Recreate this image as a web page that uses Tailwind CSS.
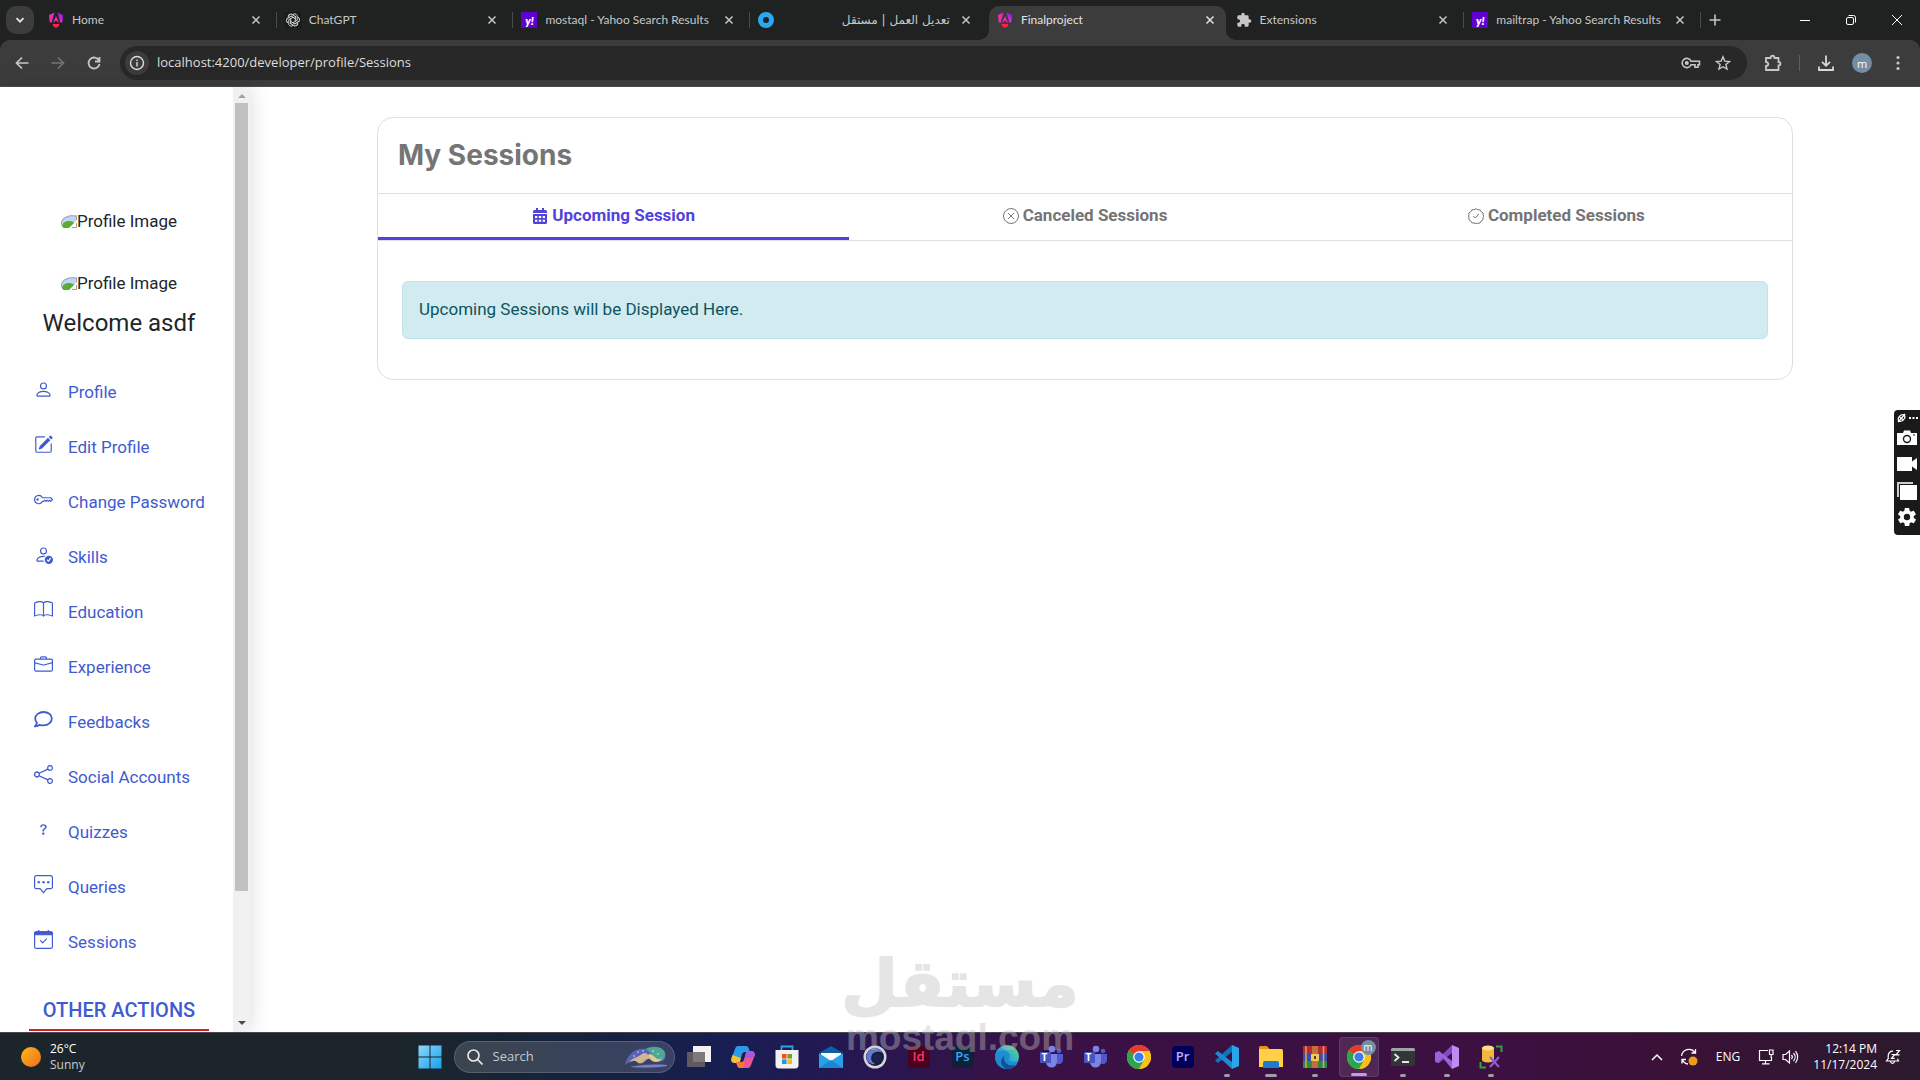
<!DOCTYPE html>
<html lang="en">
<head>
  <meta charset="UTF-8">
  <meta name="viewport" content="width=device-width, initial-scale=1.0">
  <title>Finalproject</title>
  <script src="https://cdn.jsdelivr.net/npm/@tailwindcss/browser@4"></script>
</head>
<body class="h-screen flex flex-col overflow-hidden bg-white font-['Open_Sans',sans-serif]">

  <!-- shared shapes -->
  <svg class="absolute size-0">
    <defs>
      <linearGradient id="ngGrad" x1="0" y1="1" x2="1" y2="0">
        <stop offset="0" stop-color="#ff2d6b"/><stop offset=".5" stop-color="#e32bd0"/><stop offset="1" stop-color="#6a1bf0"/>
      </linearGradient>
      <linearGradient id="winGrad" x1="0" y1="0" x2="1" y2="1">
        <stop offset="0" stop-color="#8bd8fb"/><stop offset="1" stop-color="#18a0ea"/>
      </linearGradient>
      <linearGradient id="edgeGrad" x1="0" y1="1" x2="1" y2="0">
        <stop offset="0" stop-color="#0d5aa7"/><stop offset=".5" stop-color="#2aa7dd"/><stop offset="1" stop-color="#66d96b"/>
      </linearGradient>
      <symbol id="x" viewBox="0 0 10 10"><path d="M1.5 1.5l7 7M8.500 1.500l-7 7" stroke="currentColor" stroke-width="1.5" fill="none"/></symbol>
      <symbol id="angular" viewBox="0 0 16 16">
        <path d="M1 3l5.500-2.500L3.500 11 1.600 10zM9.500.5L15 3l-.6 7-1.900 1z" fill="url(#ngGrad)"/>
        <path d="M8 4l3 6.500H9.800L9.300 9H6.700l-.5 1.500H5z" fill="#e62bb0"/>
        <path d="M4.500 12h7l-.5 2-3 2-3-2z" fill="#ff1f4b"/>
      </symbol>
      <symbol id="puzzle" viewBox="0 0 24 24"><path d="M20.500 11H19V7a2 2 0 0 0-2-2h-4V3.500a2.500 2.500 0 0 0-5 0V5H4a2 2 0 0 0-2 2v3.800h1.500a2.700 2.700 0 0 1 0 5.400H2V20a2 2 0 0 0 2 2h3.800v-1.500a2.700 2.700 0 0 1 5.400 0V22H17a2 2 0 0 0 2-2v-4h1.500a2.500 2.500 0 0 0 0-5z"/></symbol>
      <symbol id="chrome" viewBox="0 0 24 24">
        <circle cx="12" cy="12" r="12" fill="#fbc116"/>
        <path d="M12 12L1.600 6A12 12 0 0 1 22.400 6z" fill="#e33b2e"/>
        <path d="M12 12L1.600 6A12 12 0 0 0 12 24l5.200-9z" fill="#2da44e"/>
        <path d="M12 6h10.400A12 12 0 0 1 12 24l5.200-9z" fill="#fbc116"/>
        <circle cx="12" cy="12" r="5.800" fill="#fff"/><circle cx="12" cy="12" r="4.600" fill="#3b7ded"/>
      </symbol>
      <symbol id="teams" viewBox="0 0 24 24">
        <circle cx="13" cy="4" r="3.300" fill="#7b83eb"/><circle cx="20" cy="6" r="2.300" fill="#5059c9"/>
        <path d="M16 9h8v6a4 4 0 0 1-6 3.500z" fill="#5059c9"/><path d="M7 9h11v8a5.500 5.500 0 0 1-11 0z" fill="#7b83eb"/>
        <rect x="1" y="7" width="11" height="11" rx="1" fill="#4b53bc"/>
      </symbol>
      <clipPath id="oval"><ellipse cx="12" cy="9" rx="12" ry="8"/></clipPath>
      <symbol id="broken" viewBox="0 0 16 14">
        <g clip-path="url(#oval)">
          <rect width="16" height="14" fill="#bfd7f5"/>
          <ellipse cx="8" cy="12" rx="7" ry="5" fill="#5bac33"/>
          <path d="M8 14l8-8v8z" fill="#fff"/>
          <path d="M1 12a11 8 0 0 1 14-10M15.500 1v5M11 13.500h4.500V9" fill="none" stroke="#9aa0a6"/>
        </g>
      </symbol>
    </defs>
  </svg>

  <!-- browser window -->
  <header class="shrink-0 bg-[#1f2221] text-[#c7c7c7]">
    <div class="flex h-10 items-center font-['Lato',sans-serif] text-[12px]">
      <button aria-label="Search tabs" class="ml-1.5 mr-1.5 grid size-7 shrink-0 place-items-center rounded-[10px] bg-[#3c3c3c]">
        <svg class="size-2.5" viewBox="0 0 10 10" fill="none" stroke="#e3e3e3" stroke-width="1.800"><path d="M1.500 3.200L5 6.700l3.500-3.500"/></svg>
      </button>
      <div class="flex h-full max-w-[1661px] flex-1">
        <div class="flex min-w-0 flex-1 items-center gap-2 pl-2">
          <svg class="size-4 shrink-0"><use href="#angular"/></svg>
          <span class="flex-1 truncate">Home</span>
          <button aria-label="Close tab" class="grid size-4 place-items-center"><svg class="size-2.5"><use href="#x"/></svg></button>
          <span class="ml-1 h-4 w-px bg-[#4a4a4a]"></span>
        </div>
        <div class="flex min-w-0 flex-1 items-center gap-2 pl-2">
          <svg class="size-4 shrink-0" viewBox="0 0 16 16" fill="none" stroke="#d8d8d8" stroke-width="1">
            <rect width="16" height="16" rx="3" fill="#181a19" stroke="none"/>
            <g id="petal"><path d="M8 2.500a2.600 2.600 0 0 1 4.200 2.700v3.200L8 10.600"/></g>
            <use href="#petal" transform="rotate(60 8 8)"/><use href="#petal" transform="rotate(120 8 8)"/><use href="#petal" transform="rotate(180 8 8)"/><use href="#petal" transform="rotate(240 8 8)"/><use href="#petal" transform="rotate(300 8 8)"/>
          </svg>
          <span class="flex-1 truncate">ChatGPT</span>
          <button aria-label="Close tab" class="grid size-4 place-items-center"><svg class="size-2.5"><use href="#x"/></svg></button>
          <span class="ml-1 h-4 w-px bg-[#4a4a4a]"></span>
        </div>
        <div class="flex min-w-0 flex-1 items-center gap-2 pl-2">
          <span class="grid size-4 shrink-0 place-items-center bg-[#5f01d1] text-[11px] leading-none font-extrabold text-white italic">y!</span>
          <span class="flex-1 truncate">mostaql - Yahoo Search Results</span>
          <button aria-label="Close tab" class="grid size-4 place-items-center"><svg class="size-2.5"><use href="#x"/></svg></button>
          <span class="ml-1 h-4 w-px bg-[#4a4a4a]"></span>
        </div>
        <div class="flex min-w-0 flex-1 items-center gap-2 pl-2">
          <span class="size-4 shrink-0 rounded-full border-[5px] border-[#2aa8f2]"></span>
          <span class="flex-1 truncate font-['DejaVu_Sans',sans-serif] text-[12px]" dir="rtl">تعديل العمل | مستقل</span>
          <button aria-label="Close tab" class="grid size-4 place-items-center"><svg class="size-2.5"><use href="#x"/></svg></button>
          <span class="ml-1 h-4 w-px"></span>
        </div>
        <div class="relative mx-0.5 mt-1.5 flex min-w-0 flex-1 items-center gap-2 rounded-t-[10px] bg-[#3c3c3c] pb-1.5 pl-2 text-[#e3e3e3]">
          <svg class="absolute -left-2.5 bottom-0 size-2.5" viewBox="0 0 10 10"><path d="M10 0v10H0A10 10 0 0 0 10 0" fill="#3c3c3c"/></svg>
          <svg class="absolute -right-2.5 bottom-0 size-2.5" viewBox="0 0 10 10"><path d="M0 0v10h10A10 10 0 0 1 0 0" fill="#3c3c3c"/></svg>
          <svg class="size-4 shrink-0"><use href="#angular"/></svg>
          <span class="flex-1 truncate">Finalproject</span>
          <button aria-label="Close tab" class="mr-2 grid size-4 place-items-center"><svg class="size-2.5"><use href="#x"/></svg></button>
        </div>
        <div class="flex min-w-0 flex-1 items-center gap-2 pl-2">
          <svg class="size-4 shrink-0" fill="#c7c7c7"><use href="#puzzle"/></svg>
          <span class="flex-1 truncate">Extensions</span>
          <button aria-label="Close tab" class="grid size-4 place-items-center"><svg class="size-2.5"><use href="#x"/></svg></button>
          <span class="ml-1 h-4 w-px bg-[#4a4a4a]"></span>
        </div>
        <div class="flex min-w-0 flex-1 items-center gap-2 pl-2">
          <span class="grid size-4 shrink-0 place-items-center bg-[#5f01d1] text-[11px] leading-none font-extrabold text-white italic">y!</span>
          <span class="flex-1 truncate">mailtrap - Yahoo Search Results</span>
          <button aria-label="Close tab" class="grid size-4 place-items-center"><svg class="size-2.5"><use href="#x"/></svg></button>
          <span class="ml-1 h-4 w-px bg-[#4a4a4a]"></span>
        </div>
      </div>
      <button aria-label="New tab" class="grid size-7 place-items-center"><svg class="size-3" viewBox="0 0 12 12" stroke="#c7c7c7" stroke-width="1.600"><path d="M6 .5v11M.5 6h11"/></svg></button>
      <div class="ml-auto flex">
        <button aria-label="Minimize" class="grid h-10 w-[46px] place-items-center"><svg class="size-3" viewBox="0 0 12 12" stroke="#fff"><path d="M1 6.500h10"/></svg></button>
        <button aria-label="Restore" class="grid h-10 w-[46px] place-items-center"><svg class="size-3" viewBox="0 0 12 12" stroke="#fff" fill="none"><rect x="1.500" y="3.500" width="7" height="7" rx="1.500"/><path d="M3.500 1.500h5a2 2 0 0 1 2 2v5"/></svg></button>
        <button aria-label="Close" class="grid h-10 w-[46px] place-items-center"><svg class="size-3" viewBox="0 0 12 12" stroke="#fff"><path d="M1 1l10 10M11 1L1 11"/></svg></button>
      </div>
    </div>

    <div class="flex h-[47px] items-center rounded-t-[10px] border-b border-[#4a4a4a] bg-[#3c3c3c] pr-1">
      <div class="flex w-30 items-center pl-1">
        <button aria-label="Back" class="grid size-9 place-items-center"><svg class="size-3.5" viewBox="0 0 14 14" fill="none" stroke="#c7c7c7" stroke-width="1.700"><path d="M13.500 7H1.500M7 1.500L1.500 7 7 12.500"/></svg></button>
        <button aria-label="Forward" class="grid size-9 place-items-center"><svg class="size-3.5" viewBox="0 0 14 14" fill="none" stroke="#757575" stroke-width="1.700"><path d="M.5 7h12M7 1.500L12.500 7 7 12.500"/></svg></button>
        <button aria-label="Reload" class="grid size-9 place-items-center"><svg class="size-3.5" viewBox="0 0 14 14" fill="none" stroke="#c7c7c7" stroke-width="1.800"><path d="M12 4.500A5.500 5.500 0 1 0 12.500 8M12.500 1v4.500H8"/></svg></button>
      </div>
      <div class="flex h-[34px] flex-1 items-center rounded-full bg-[#282828] pl-[5px] pr-2">
        <button aria-label="Site information" class="grid size-6 place-items-center rounded-full bg-[#3c3c3c]">
          <svg class="size-4" viewBox="0 0 16 16" fill="none" stroke="#dcdcdc" stroke-width="1.400"><circle cx="8" cy="8" r="6.500"/><path d="M8 7v4.500M8 4.400v1.600"/></svg>
        </button>
        <input aria-label="Address" class="ml-2 flex-1 bg-transparent text-[13px] text-[#dedede] outline-none" value="localhost:4200/developer/profile/Sessions">
        <button aria-label="Passwords" class="grid size-8 place-items-center"><svg class="h-3 w-5" viewBox="0 0 20 12" fill="none" stroke="#c7c7c7" stroke-width="1.600"><path d="M10 4.200h8.500v3.600H17v2.500h-3V7.800h-4a4.600 4.600 0 1 1 0-3.600z"/><circle cx="5.800" cy="6" r="1.200" fill="#c7c7c7"/></svg></button>
        <button aria-label="Bookmark" class="grid size-8 place-items-center"><svg class="size-4" viewBox="0 0 16 16" fill="none" stroke="#c7c7c7" stroke-width="1.400"><path d="M8 1.800l1.800 4.300 4.700.4-3.600 3 1.100 4.600L8 11.700l-4 2.400 1.100-4.600-3.600-3 4.700-.4z"/></svg></button>
      </div>
      <button aria-label="Extensions" class="ml-2 grid size-9 place-items-center"><svg class="size-[18px]" viewBox="0 0 18 18" fill="none" stroke="#c7c7c7" stroke-width="1.800"><path d="M2 4h4.500c0-3 4-3 4 0H14.500v4c2.600 0 2.600 3.500 0 3.500V16H2v-4c3 0 3-4 0-4z"/></svg></button>
      <span class="mx-2 h-4 w-px bg-[#66586b]"></span>
      <button aria-label="Downloads" class="grid size-9 place-items-center"><svg class="size-4" viewBox="0 0 16 16" fill="none" stroke="#d8d8d8" stroke-width="1.800"><path d="M8 .5v10M4 6.800l4 4 4-4M1 11.500V15h14v-3.500"/></svg></button>
      <button aria-label="Account" class="grid size-9 place-items-center"><span class="grid size-5 place-items-center rounded-full bg-[#768ea4] text-[11px] leading-none text-white">m</span></button>
      <button aria-label="Menu" class="grid size-9 place-items-center"><svg class="size-4" viewBox="0 0 16 16" fill="#c7c7c7"><circle cx="8" cy="2.500" r="1.600"/><circle cx="8" cy="8" r="1.600"/><circle cx="8" cy="13.500" r="1.600"/></svg></button>
    </div>
  </header>

  <!-- page -->
  <div class="flex min-h-0 flex-1 font-['Roboto',sans-serif]">
    <aside class="flex w-[250px] shrink-0 shadow-[0_0_20px_rgba(0,0,0,0.15)]">
      <div class="flex-1 overflow-hidden text-[17px] leading-6 text-[#212529]">
        <div class="ml-[29px] w-[180px] pt-[122px] text-center">
          <p class="flex h-6 items-center justify-center"><svg class="h-3.5 w-4"><use href="#broken"/></svg>Profile Image</p>
          <p class="mt-[38px] flex h-6 items-center justify-center"><svg class="h-3.5 w-4"><use href="#broken"/></svg>Profile Image</p>
          <h2 class="mt-3 text-[24px] leading-8">Welcome asdf</h2>
        </div>
        <nav class="mt-[25px] pl-[34px] text-[#3f5bd0]">
          <a href="#" class="flex h-[55px] items-center gap-[15px]">
            <svg class="mb-1 size-[19px]" viewBox="0 0 16 16" fill="currentColor"><path d="M8 8a3 3 0 1 0 0-6 3 3 0 0 0 0 6m2-3a2 2 0 1 1-4 0 2 2 0 0 1 4 0m4 8c0 1-1 1-1 1H3s-1 0-1-1 1-4 6-4 6 3 6 4m-1-.004c-.001-.246-.154-.986-.832-1.664C11.516 10.680 10.289 10 8 10s-3.516.680-4.168 1.332c-.678.678-.830 1.418-.832 1.664z"/></svg>
            Profile</a>
          <a href="#" class="flex h-[55px] items-center gap-[15px]">
            <svg class="mb-1 size-[19px]" viewBox="0 0 16 16" fill="currentColor"><path d="M15.502 1.940a.5.5 0 0 1 0 .706L14.459 3.690l-2-2L13.502.646a.5.5 0 0 1 .707 0l1.293 1.293zm-1.750 2.456-2-2L4.939 9.210a.5.5 0 0 0-.121.196l-.805 2.414a.25.25 0 0 0 .316.316l2.414-.805a.5.5 0 0 0 .196-.12l6.813-6.814z"/><path d="M1 13.500A1.500 1.500 0 0 0 2.500 15h11a1.500 1.500 0 0 0 1.500-1.500v-6a.5.5 0 0 0-1 0v6a.5.5 0 0 1-.5.5h-11a.5.5 0 0 1-.5-.5v-11a.5.5 0 0 1 .5-.5H9a.5.5 0 0 0 0-1H2.500A1.500 1.500 0 0 0 1 2.500z"/></svg>
            Edit Profile</a>
          <a href="#" class="flex h-[55px] items-center gap-[15px]">
            <svg class="mb-1 size-[19px]" viewBox="0 0 16 16" fill="currentColor"><path d="M0 8a4 4 0 0 1 7.465-2H14a.5.5 0 0 1 .354.146l1.500 1.500a.5.5 0 0 1 0 .708l-1.500 1.500a.5.5 0 0 1-.708 0L13 9.207l-.646.647a.5.5 0 0 1-.708 0L11 9.207l-.646.647a.5.5 0 0 1-.708 0L9 9.207l-.646.647A.5.5 0 0 1 8 10h-.535A4 4 0 0 1 0 8m4-3a3 3 0 1 0 2.712 4.285A.5.5 0 0 1 7.163 9h.63l.853-.854a.5.5 0 0 1 .708 0l.646.647.646-.647a.5.5 0 0 1 .708 0l.646.647.646-.647a.5.5 0 0 1 .708 0l.646.647.793-.793-1-1h-6.630a.5.5 0 0 1-.451-.285A3 3 0 0 0 4 5"/><path d="M4 8a1 1 0 1 1-2 0 1 1 0 0 1 2 0"/></svg>
            Change Password</a>
          <a href="#" class="flex h-[55px] items-center gap-[15px]">
            <svg class="mb-1 size-[19px]" viewBox="0 0 16 16" fill="currentColor"><path d="M12.500 16a3.500 3.500 0 1 0 0-7 3.500 3.500 0 0 0 0 7m1.679-4.493-1.335 2.226a.75.75 0 0 1-1.174.144l-.774-.773a.5.5 0 0 1 .708-.708l.547.548 1.170-1.951a.5.5 0 1 1 .858.514M11 5a3 3 0 1 1-6 0 3 3 0 0 1 6 0M8 7a2 2 0 1 0 0-4 2 2 0 0 0 0 4"/><path d="M8.256 14a4.500 4.500 0 0 1-.229-1.004H3c.001-.246.154-.986.832-1.664C4.484 10.680 5.711 10 8 10q.39 0 .74.025c.226-.341.496-.650.804-.918Q8.844 9.002 8 9c-5 0-6 3-6 4s1 1 1 1z"/></svg>
            Skills</a>
          <a href="#" class="flex h-[55px] items-center gap-[15px]">
            <svg class="mb-1 size-[19px]" viewBox="0 0 16 16" fill="currentColor"><path d="M1 2.828c.885-.370 2.154-.769 3.388-.893 1.330-.134 2.458.063 3.112.752v9.746c-.935-.530-2.120-.603-3.213-.493-1.180.12-2.370.461-3.287.811zm7.500-.141c.654-.689 1.782-.886 3.112-.752 1.234.124 2.503.523 3.388.893v9.923c-.918-.350-2.107-.692-3.287-.810-1.094-.111-2.278-.039-3.213.492zM8 1.783C7.015.936 5.587.81 4.287.94c-1.514.153-3.042.672-3.994 1.105A.5.5 0 0 0 0 2.500v11a.5.5 0 0 0 .707.455c.882-.4 2.303-.881 3.680-1.020 1.409-.142 2.590.087 3.223.877a.5.5 0 0 0 .78 0c.633-.790 1.814-1.019 3.222-.877 1.378.139 2.800.62 3.681 1.020A.5.5 0 0 0 16 13.500v-11a.5.5 0 0 0-.293-.455c-.952-.433-2.480-.952-3.994-1.105C10.413.809 8.985.936 8 1.783"/></svg>
            Education</a>
          <a href="#" class="flex h-[55px] items-center gap-[15px]">
            <svg class="mb-1 size-[19px]" viewBox="0 0 16 16" fill="currentColor"><path d="M6.500 1A1.500 1.500 0 0 0 5 2.500V3H1.500A1.500 1.500 0 0 0 0 4.500v8A1.500 1.500 0 0 0 1.500 14h13a1.500 1.500 0 0 0 1.500-1.500v-8A1.500 1.500 0 0 0 14.500 3H11v-.5A1.500 1.500 0 0 0 9.500 1zm0 1h3a.5.5 0 0 1 .5.5V3H6v-.5a.5.5 0 0 1 .5-.5m1.886 6.914L15 7.151V12.500a.5.5 0 0 1-.5.5h-13a.5.5 0 0 1-.5-.5V7.150l6.614 1.764a1.500 1.500 0 0 0 .772 0M1.500 4h13a.5.5 0 0 1 .5.5v1.616L8.129 7.948a.5.5 0 0 1-.258 0L1 6.116V4.500a.5.5 0 0 1 .5-.5"/></svg>
            Experience</a>
          <a href="#" class="flex h-[55px] items-center gap-[15px]">
            <svg class="mb-1 size-[19px]" viewBox="0 0 19 19" fill="none" stroke="currentColor" stroke-width="1.800" stroke-linejoin="round"><path d="M9.500 2C5.200 2 1.200 4.800 1.200 8.500c0 1.600.6 3 1.700 4.100-.2 1.400-.8 2.600-2 3.800 2 .1 3.500-.5 4.800-1.600 1.200.4 2.400.6 3.800.6 4.600 0 8.300-3 8.300-6.900S14 2 9.500 2z"/></svg>
            Feedbacks</a>
          <a href="#" class="flex h-[55px] items-center gap-[15px]">
            <svg class="mb-1 size-[19px]" viewBox="0 0 16 16" fill="currentColor"><path d="M13.500 1a1.500 1.500 0 1 0 0 3 1.500 1.500 0 0 0 0-3M11 2.500a2.500 2.500 0 1 1 .603 1.628l-6.718 3.120a2.500 2.500 0 0 1 0 1.504l6.718 3.120a2.500 2.500 0 1 1-.488.876l-6.718-3.120a2.500 2.500 0 1 1 0-3.256l6.718-3.120A2.500 2.500 0 0 1 11 2.500m-8.500 4a1.500 1.500 0 1 0 0 3 1.500 1.500 0 0 0 0-3m11 5.500a1.500 1.500 0 1 0 0 3 1.500 1.500 0 0 0 0-3"/></svg>
            Social Accounts</a>
          <a href="#" class="flex h-[55px] items-center gap-[15px]">
            <svg class="mb-1 size-[19px]" viewBox="0 0 16 16" fill="currentColor"><path d="M5.255 5.786a.237.237 0 0 0 .241.247h.825c.138 0 .248-.113.266-.250.09-.656.54-1.134 1.342-1.134.686 0 1.314.343 1.314 1.168 0 .635-.374.927-.965 1.371-.673.489-1.206 1.060-1.168 1.987l.003.217a.25.25 0 0 0 .25.246h.811a.25.25 0 0 0 .25-.25v-.105c0-.718.273-.927 1.010-1.486.609-.463 1.244-.977 1.244-2.056 0-1.511-1.276-2.241-2.673-2.241-1.267 0-2.655.59-2.750 2.286m1.557 5.763c0 .533.425.927 1.010.927.609 0 1.028-.394 1.028-.927 0-.552-.420-.940-1.029-.940-.584 0-1.009.388-1.009.94"/></svg>
            Quizzes</a>
          <a href="#" class="flex h-[55px] items-center gap-[15px]">
            <svg class="mb-1 size-[19px]" viewBox="0 0 16 16" fill="none" stroke="currentColor"><path d="M2 .5h12A1.500 1.500 0 0 1 15.500 2v8a1.500 1.500 0 0 1-1.500 1.500h-2.500c-.6 0-1 .2-1.300.6L8 15l-2.200-2.900c-.3-.4-.7-.6-1.300-.6H2A1.500 1.500 0 0 1 .5 10V2A1.500 1.500 0 0 1 2 .5z"/><g fill="currentColor" stroke="none"><circle cx="4" cy="6" r="1"/><circle cx="8" cy="6" r="1"/><circle cx="12" cy="6" r="1"/></g></svg>
            Queries</a>
          <a href="#" class="flex h-[55px] items-center gap-[15px]">
            <svg class="mb-1 size-[19px]" viewBox="0 0 16 16" fill="none" stroke="currentColor"><rect x=".5" y="1.500" width="15" height="14" rx="1.500"/><path d="M.5 4V3A1.500 1.500 0 0 1 2 1.500h12A1.500 1.500 0 0 1 15.500 3v1zM4 0v2M12 0v2" fill="currentColor"/><path d="M5.500 9l1.800 1.800 3.200-3.300" stroke-linecap="round" stroke-linejoin="round"/></svg>
            Sessions</a>
        </nav>
        <h3 class="ml-[29px] mt-[29px] w-[180px] border-b-2 border-[#d21f1f] pb-[7px] text-center text-[20px] leading-6 font-medium text-[#3f5bd0]">OTHER ACTIONS</h3>
      </div>
      <div class="flex w-[17px] flex-col items-center bg-[#f1f1f1]">
        <svg class="h-4 w-2 shrink-0" viewBox="0 0 8 16" fill="#a3a3a3"><path d="M0 11l4-4 4 4z"/></svg>
        <div class="w-[13px] grow-[63] bg-[#c1c1c1]"></div>
        <div class="grow-[10]"></div>
        <svg class="h-4 w-2 shrink-0" viewBox="0 0 8 16" fill="#4a4a4a"><path d="M0 5l4 4 4-4z"/></svg>
      </div>
    </aside>

    <main class="flex-1 px-[127px] pt-[30px]">
      <section class="overflow-hidden rounded-2xl border border-[#dfdfdf]">
        <h1 class="px-5 py-[18px] font-['Inter',sans-serif] text-[28px] leading-[39px] font-bold text-[#757575]">My Sessions</h1>
        <div class="flex border-y border-[#dfdfdf] text-[17px] font-bold text-[#757575]">
          <button class="flex h-[46px] flex-1 items-center justify-center gap-1 border-b-3 border-[#5143d9] text-[#5143d9]">
            <svg class="size-4" viewBox="0 0 16 16" fill="currentColor"><path d="M4 0h2v2h4V0h2v2h1.500A1.500 1.500 0 0 1 15 3.500V5H1V3.500A1.500 1.500 0 0 1 2.500 2H4z"/><path fill-rule="evenodd" d="M1 6h14v8.500a1.500 1.500 0 0 1-1.500 1.500h-11A1.500 1.500 0 0 1 1 14.500zm2 2v2h2.300V8zm3.800 0v2h2.400V8zm3.900 0v2H13V8zM3 11.700v2h2.300v-2zm3.800 0v2h2.400v-2zm3.900 0v2H13v-2z"/></svg>
            Upcoming Session
          </button>
          <button class="flex h-[46px] flex-1 items-center justify-center gap-1 border-b-3 border-transparent">
            <svg class="size-4" viewBox="0 0 16 16" fill="none" stroke="currentColor"><circle cx="8" cy="8" r="7.500"/><path d="M5 5l6 6M11 5l-6 6"/></svg>
            Canceled Sessions
          </button>
          <button class="flex h-[46px] flex-1 items-center justify-center gap-1 border-b-3 border-transparent">
            <svg class="size-4" viewBox="0 0 16 16" fill="none" stroke="currentColor"><path d="M8 .7l1.900 1.100 2.200.1 1.100 1.900 1.900 1.200-.1 2.200L16 8l-1 1.800-.1 2.200-1.800 1.200-1.100 1.900-2.200.1L8 15.500l-1.900-.5-2.200-.1-1.100-1.900L1 11.800l-.1-2.200L.6 8 1 6.200.9 4.900l1.900-1.200 1.100-1.800 2.200-.1z"/><path d="M5.300 8l2 2 3.500-4"/></svg>
            Completed Sessions
          </button>
        </div>
        <div class="px-6 pt-10 pb-10">
          <p role="alert" class="rounded-md border border-[#bee5eb] bg-[#d1ebf0] px-4 pt-[15px] pb-[17px] text-[17px] leading-6 text-[#0c5460]">Upcoming Sessions will be Displayed Here.</p>
        </div>
      </section>
    </main>
  </div>

  <!-- screen recorder palette -->
  <div class="absolute top-[410px] right-0 flex w-[26px] flex-col items-center gap-[7px] rounded-l-sm bg-[#1a1a1a] pt-[3px] pb-2 text-white">
    <svg class="h-2.5 w-6" viewBox="0 0 24 10" fill="none" stroke="#fff" stroke-width="1.300"><ellipse cx="6.500" cy="5" rx="3.800" ry="2.600" transform="rotate(-45 6.500 5)"/><path d="M3 9l7-8M4.500 4l4 3"/><path d="M14 5h9" stroke-width="2" stroke-dasharray="2 1.500"/></svg>
    <svg class="h-4 w-5" viewBox="0 0 20 16"><path d="M0 3h6l1-2.500h6L14 3h6v12H0z" fill="#fff"/><circle cx="10" cy="9" r="3.500" fill="none" stroke="#1a1a1a" stroke-width="1.400"/><path d="M16 5h2" stroke="#1a1a1a"/></svg>
    <svg class="mt-1 h-3.5 w-5" viewBox="0 0 20 14" fill="#fff"><path d="M0 0h15v4.500L20 1v12l-5-3.500V14H0z"/></svg>
    <svg class="mt-1 h-[18px] w-5" viewBox="0 0 20 18"><path d="M0 0h16v2H2v13H0z" fill="#ccc"/><path d="M3 3h17v15H3z" fill="#fff"/></svg>
    <svg class="size-5" viewBox="1 1 22 22" fill="#fff"><path fill-rule="evenodd" d="M19.400 13a7.500 7.500 0 0 0 0-2l2.100-1.600a.5.5 0 0 0 .1-.7l-2-3.400a.5.5 0 0 0-.6-.2l-2.500 1a7.300 7.300 0 0 0-1.700-1l-.4-2.700A.5.5 0 0 0 14 2h-4a.5.5 0 0 0-.5.400l-.4 2.700a7.300 7.300 0 0 0-1.700 1l-2.500-1a.5.5 0 0 0-.6.200l-2 3.400a.5.5 0 0 0 .1.700L4.600 11a7.500 7.500 0 0 0 0 2l-2.100 1.600a.5.5 0 0 0-.1.700l2 3.400c.1.200.4.300.6.200l2.500-1c.5.400 1.100.7 1.700 1l.4 2.700c0 .2.200.4.400.4h4c.2 0 .4-.2.500-.4l.4-2.700a7.300 7.300 0 0 0 1.700-1l2.500 1c.2.100.5 0 .6-.2l2-3.400a.5.5 0 0 0-.1-.7zM12 8.500a3.500 3.500 0 1 1 0 7 3.500 3.500 0 0 1 0-7z"/></svg>
  </div>

  <!-- taskbar -->
  <footer class="grid h-12 shrink-0 grid-cols-[1fr_auto_1fr] items-center border-t border-[#494652] bg-[linear-gradient(90deg,#1b252b_0%,#1b252b_21%,#15233d_30%,#181e52_38%,#291650_46%,#3a1145_54%,#3c1040_78%,#3b1038_86%,#2b1a2d_100%)] text-[12px] text-white">
    <div class="flex items-center gap-[9px] pl-[21px]">
      <svg class="size-5" viewBox="0 0 20 20"><defs><linearGradient id="sun" x1="0" y1="0" x2="1" y2="1"><stop offset="0" stop-color="#fbb61c"/><stop offset="1" stop-color="#ee6f1b"/></linearGradient></defs><circle cx="10" cy="10" r="10" fill="url(#sun)"/></svg>
      <p class="leading-4">26°C<br><span class="text-[#c9cdd0]">Sunny</span></p>
    </div>

    <div class="flex items-center gap-1">
      <button aria-label="Start" class="grid size-10 place-items-center"><svg class="size-6" viewBox="0 0 24 24" fill="url(#winGrad)"><path d="M.5.5h11v11H.5zM12.500.5h11v11h-11zM.5 12.500h11v11H.5zM12.500 12.500h11v11h-11z"/></svg></button>
      <label class="flex h-8 w-[221px] items-center gap-2.5 rounded-full border border-white/15 bg-white/15 pr-1.5 pl-3">
        <svg class="size-4 shrink-0" viewBox="0 0 16 16" fill="none" stroke="#e6e6e6" stroke-width="1.700"><circle cx="6.500" cy="6.500" r="5.500"/><path d="M10.500 10.500l5 5"/></svg>
        <input aria-label="Search" placeholder="Search" class="w-full min-w-0 bg-transparent text-[13px] outline-none placeholder:text-[#c5c9cf]">
        <svg class="h-6 w-11 shrink-0" viewBox="0 0 44 24"><path d="M1 20C3 10 11 2 22 4c5-4 17-3 19 4 2 6-2 9-6 9-4 1-6-4-9-3-4 0-5 4-9 5-4 0-4-4-8-3-3 0-5 2-8 4z" fill="#5864b8"/><path d="M22 4c6-3 17-3 19 4 1 5-3 8-6 8-3 0-5-3-7-7z" fill="#4fa893"/><path d="M5 17c5-5 8-4 13-8 4-3 7 1 8 5-5-1-5 4-9 4-4 1-4-3-8-2z" fill="#d3b594"/><path d="M24 10c3-3 5 1 8 3 2 2 5 1 6 0-2 5-9 5-12 1z" fill="#e3c998"/><path d="M6 22c8-2 25-3 37-2v1c-10 2-26 2-37 1z" fill="#7a80c4"/><g fill="#fff"><circle cx="14" cy="7" r=".7"/><circle cx="19" cy="6" r=".7"/><circle cx="29" cy="6" r=".7"/><circle cx="34" cy="9" r=".7"/><circle cx="10" cy="11" r=".7"/></g></svg>
      </label>
      <button aria-label="Task view" class="grid size-10 place-items-center"><svg class="size-6" viewBox="0 0 24 24"><path d="M6 1h18v16H6z" fill="#f2f2f2"/><path d="M0 7h18v15H0z" fill="#6b6466" fill-opacity=".85"/></svg></button>
      <button aria-label="Copilot" class="grid size-10 place-items-center"><svg class="size-6" viewBox="0 0 24 24"><path d="M7 1h8c2 0 2.500 1.500 3 3l1 3h-5c-2 0-2.500 1-3 2.500L8.500 18H4c-3 0-4.500-2-3.500-5L4 4c.6-1.800 1.500-3 3-3z" fill="#2b9be8"/><path d="M1.500 10L.4 13.500C-.4 16.500 1 18 4 18h4.500l1.400-5z" fill="#f2c230"/><path d="M17 23H9c-2 0-2.500-1.500-3-3l-1-3h5c2 0 2.500-1 3-2.500L15.500 6H20c3 0 4.500 2 3.500 5L20 20c-.6 1.800-1.500 3-3 3z" fill="#e8559c"/><path d="M5 17l1 3c.5 1.500 1 3 3 3h3l2-6z" fill="#f4763b"/><path d="M15.500 6H20c3 0 4.500 2 3.500 5l-.8 2h-9z" fill="#a55be0"/></svg></button>
      <button aria-label="Microsoft Store" class="grid size-10 place-items-center"><svg class="size-6" viewBox="0 0 24 24"><path d="M6.500 6V1.500h11V6" fill="none" stroke="#2aa3e6" stroke-width="1.800"/><path d="M.5 5h23v15a3.500 3.500 0 0 1-3.500 3.500H4A3.500 3.500 0 0 1 .5 20z" fill="#f1f1f1"/><path d="M7 9h4.600v4.600H7z" fill="#f25022"/><path d="M12.400 9H17v4.600h-4.600z" fill="#6fa81c"/><path d="M7 14.400h4.600V19H7z" fill="#1b9be6"/><path d="M12.400 14.400H17V19h-4.600z" fill="#fbb616"/></svg></button>
      <button aria-label="Mail" class="grid size-10 place-items-center"><svg class="size-6" viewBox="0 0 24 24"><path d="M0 8l12-7 12 7z" fill="#0f5fa8"/><path d="M2 8h20v8H2z" fill="#fff"/><path d="M0 8l12 8 12-8v15H0z" fill="#2aa0e8"/><path d="M0 23l12-8 12 8z" fill="#1d86d2"/></svg></button>
      <button aria-label="Cinema 4D" class="grid size-10 place-items-center"><svg class="size-6" viewBox="0 0 24 24"><circle cx="12" cy="12" r="11.500" fill="#d5d6dc"/><circle cx="12" cy="12" r="9" fill="#171d3d"/><path d="M20 7.500A9 9 0 0 0 3.500 14c1 3 5 6 9 5-4-2-5-5-4-8 1-4 6-5 11.500-3.500z" fill="#6678cf"/><circle cx="14" cy="13" r="4.500" fill="#1b234e"/></svg></button>
      <button aria-label="InDesign" class="grid size-10 place-items-center"><span class="grid size-[22px] place-items-center rounded-sm bg-[#49021f] text-[13px] leading-none font-semibold text-[#ff3366]">Id</span></button>
      <button aria-label="Photoshop" class="grid size-10 place-items-center"><span class="grid size-[22px] place-items-center rounded-sm bg-[#0f2136] text-[13px] leading-none font-semibold text-[#31a8ff]">Ps</span></button>
      <button aria-label="Edge" class="grid size-10 place-items-center"><svg class="size-6" viewBox="0 0 24 24"><circle cx="12" cy="12" r="12" fill="url(#edgeGrad)"/><path d="M.5 9C4 3.500 14 5 15 11c0 2-2 2-1 4 2 3 7 2 9 .5A12 12 0 0 1 12 24C5 24-1 18 .5 9z" fill="#1f8ccf"/><path d="M12 24c-6-1-8-9-3-13-1 6 4 11 11 9-2 3-5 4-8 4z" fill="#124f96"/></svg></button>
      <button aria-label="Teams" class="relative grid size-10 place-items-center"><svg class="size-6"><use href="#teams"/></svg><span class="absolute top-[14px] left-[11px] text-[10px] leading-3 font-bold">T</span></button>
      <button aria-label="Teams classic" class="relative grid size-10 place-items-center"><svg class="size-6"><use href="#teams"/></svg><span class="absolute top-[14px] left-[11px] text-[10px] leading-3 font-bold">T</span></button>
      <button aria-label="Chrome" class="grid size-10 place-items-center"><svg class="size-6"><use href="#chrome"/></svg></button>
      <button aria-label="Premiere Pro" class="grid size-10 place-items-center"><span class="grid size-[22px] place-items-center rounded-sm bg-[#00005b] text-[13px] leading-none font-semibold text-[#b9b2ff]">Pr</span></button>
      <button aria-label="Visual Studio Code" class="relative grid size-10 place-items-center"><svg class="size-6" viewBox="0 0 24 24"><path d="M17 0l7 3v18l-7 3z" fill="#2aa4ea"/><path d="M17 0v7L3 18l-3-2.500z" fill="#0f73b8"/><path d="M17 24v-7L3 6 0 8.500z" fill="#1a8ad4"/></svg><span class="absolute bottom-0 h-[3px] w-1.5 rounded-full bg-[#a39ba6]"></span></button>
      <button aria-label="File Explorer" class="relative grid size-10 place-items-center"><svg class="size-6" viewBox="0 0 24 24"><path d="M0 2.500A1.500 1.500 0 0 1 1.500 1H8l2.500 3H0z" fill="#e8931c"/><path d="M0 4h22.500A1.500 1.500 0 0 1 24 5.500V22H0z" fill="#ffcf48"/><path d="M4 23v-5a2 2 0 0 1 2-2h12a2 2 0 0 1 2 2v5z" fill="#1c7cc9"/></svg><span class="absolute bottom-0 h-[3px] w-3 rounded-full bg-[#a39ba6]"></span></button>
      <button aria-label="WinRAR" class="relative grid size-10 place-items-center"><svg class="size-6" viewBox="0 0 24 24"><path d="M0 1h24v7H0z" fill="#b52b3b"/><path d="M0 8h24v8H0z" fill="#3b4cb0"/><path d="M0 16h24v7H0z" fill="#2c8a45"/><path d="M3 1v22M20.500 1v22" stroke="#d8a94a" stroke-width="1.500"/><path d="M9 1h6v22H9z" fill="#c2703a"/><path d="M8 9h8v7H8z" fill="#f0c95a"/><path d="M11 11h2v3h-2z" fill="#6b3a1a"/></svg><span class="absolute bottom-0 h-[3px] w-1.5 rounded-full bg-[#a39ba6]"></span></button>
      <button aria-label="Chrome window" class="relative grid size-10 place-items-center rounded-sm border border-white/10 bg-white/10"><svg class="size-6"><use href="#chrome"/></svg><span class="absolute top-0.5 right-0.5 grid size-[15px] place-items-center rounded-full bg-[#768ea4] text-[10px] leading-none">m</span><span class="absolute bottom-0 h-[3px] w-4 rounded-full bg-[#cf93f0]"></span></button>
      <button aria-label="Terminal" class="relative grid size-10 place-items-center"><svg class="size-6" viewBox="0 0 24 24"><rect y="3" width="24" height="18" rx="1.500" fill="#333637"/><path d="M0 6V4.500A1.500 1.500 0 0 1 1.500 3h21A1.500 1.500 0 0 1 24 4.500V6z" fill="#a0a3a5"/><path d="M3.500 9l4 3.500-4 3.500M11 17h7" fill="none" stroke="#e8e8e8" stroke-width="1.800"/></svg><span class="absolute bottom-0 h-[3px] w-1.5 rounded-full bg-[#a39ba6]"></span></button>
      <button aria-label="Visual Studio" class="relative grid size-10 place-items-center"><svg class="size-6" viewBox="0 0 24 24"><path d="M17 0l7 3v18l-7 3z" fill="#c08af0"/><path d="M17 0v8L4 18l-4-1z" fill="#8148c4"/><path d="M17 24v-8L4 6 0 7.500v9l3 1.500 4.500-5.500z" fill="#9a63dc"/></svg><span class="absolute bottom-0 h-[3px] w-1.5 rounded-full bg-[#a39ba6]"></span></button>
      <button aria-label="SQL Server Management Studio" class="relative grid size-10 place-items-center"><svg class="size-6" viewBox="0 0 24 24"><path d="M3 3v12a6 2.500 0 0 0 12 0V3z" fill="#f0b93c"/><ellipse cx="9" cy="3" rx="6" ry="2.500" fill="#ffdf8a"/><path d="M17 1.500h5.500V7M1.500 17v5.500H7" fill="none" stroke="#2fa344" stroke-width="2"/><path d="M11 12l9 10M20 12l-9 10" stroke="#8d5cd0" stroke-width="2.200"/></svg><span class="absolute bottom-0 h-[3px] w-1.5 rounded-full bg-[#a39ba6]"></span></button>
    </div>

    <div class="flex items-center justify-end pr-[19px]">
      <button aria-label="Hidden icons" class="mr-[17px]"><svg class="h-2 w-3" viewBox="0 0 12 8" fill="none" stroke="#fff" stroke-width="1.500"><path d="M1 7l5-5 5 5"/></svg></button>
      <svg class="mr-[18px] size-[18px]" viewBox="0 0 18 18" fill="none" stroke="#fff" stroke-width="1.300"><path d="M1.500 8A7.500 7.500 0 0 1 15 4.500M15.500 1v4h-4M8 16a7 7 0 0 1-5.500-4M2 15.500V11.500h4"/><circle cx="13" cy="13" r="4.500" fill="#f09a1c" stroke="none"/></svg>
      <span class="mr-[18px]">ENG</span>
      <svg class="mr-2 size-4" viewBox="0 0 16 16" fill="none" stroke="#fff" stroke-width="1.200"><path d="M10 1.500H1.500v10h12V8M7.500 11.500v3M4 14.800h7.500"/><path d="M11.500 1h3.500v4.500h-3.500zM13.200 5.500V9"/></svg>
      <svg class="mr-[14px] h-4 w-[17px]" viewBox="0 0 17 16" fill="none" stroke="#fff" stroke-width="1.200"><path d="M1 5.500h2.500L7.500 2v12l-4-3.500H1z"/><path d="M9.500 6a3 3 0 0 1 0 4M11.500 4a6 6 0 0 1 0 8M13.500 2.200a9 9 0 0 1 0 11.600"/></svg>
      <p class="mr-2 text-right leading-4">12:14 PM<br>11/17/2024</p>
      <svg class="size-4" viewBox="0 0 16 16" fill="none" stroke="#fff" stroke-width="1.200"><path d="M8 2.200A4.500 4.500 0 0 0 3.200 7v2.500L1.500 12h12L12.500 9.800M5.500 12.500c.4 2.500 3.600 2.500 4 0M6.500 5.500h3.200L6.500 9.300h3.200M11 1.500h3.500L11 5.800h3.500"/></svg>
    </div>
  </footer>

  <!-- watermark -->
  <div class="pointer-events-none absolute inset-x-0 bottom-7 flex flex-col items-center font-bold text-[#c0c0c0] opacity-40">
    <span class="font-['DejaVu_Sans',sans-serif] text-[65px] leading-[72px] [-webkit-text-stroke:2px_#c0c0c0]" lang="ar" dir="rtl">مستقل</span>
    <span class="h-8 overflow-hidden font-['Liberation_Sans',sans-serif] text-[37px] leading-9">mostaql.com</span>
  </div>
</body>
</html>
